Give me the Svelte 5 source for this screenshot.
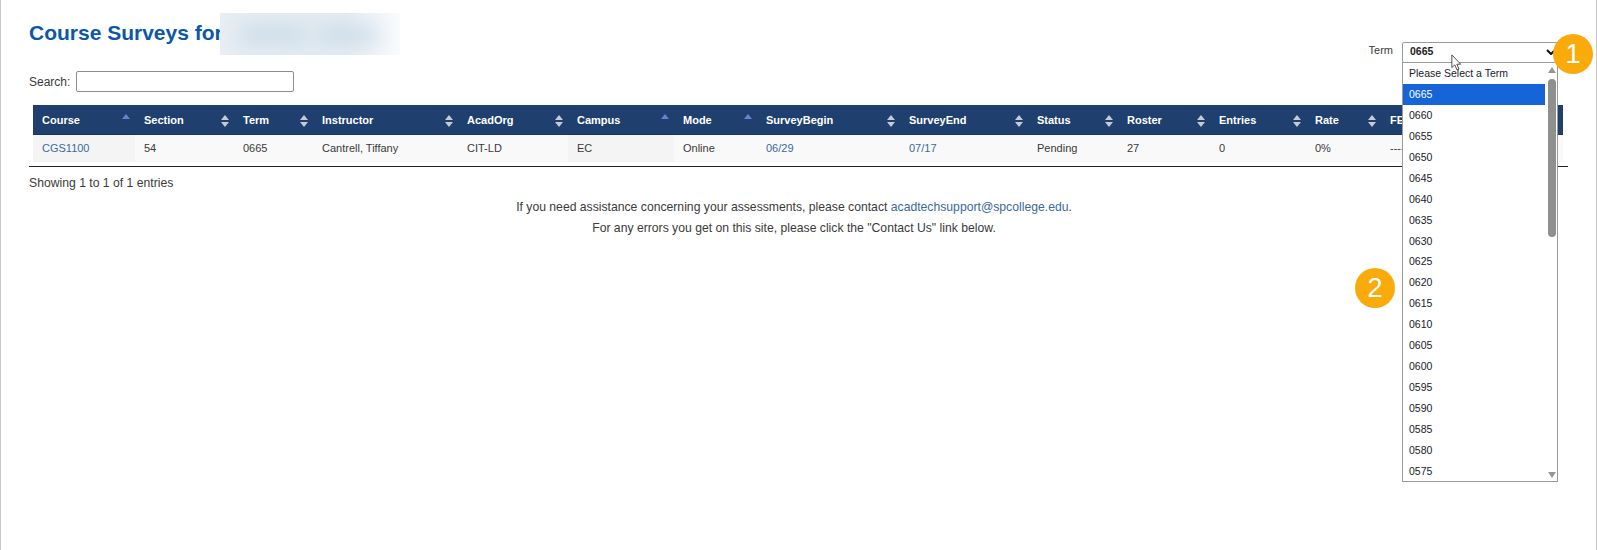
<script lang="ts">
  const columns = [
    { name: "Course", width: 102, sort: "up" },
    { name: "Section", width: 99, sort: "both" },
    { name: "Term", width: 79, sort: "both" },
    { name: "Instructor", width: 145, sort: "both" },
    { name: "AcadOrg", width: 110, sort: "both" },
    { name: "Campus", width: 106, sort: "up" },
    { name: "Mode", width: 83, sort: "up" },
    { name: "SurveyBegin", width: 143, sort: "both" },
    { name: "SurveyEnd", width: 128, sort: "both" },
    { name: "Status", width: 90, sort: "both" },
    { name: "Roster", width: 92, sort: "both" },
    { name: "Entries", width: 96, sort: "both" },
    { name: "Rate", width: 75, sort: "both" },
    { name: "FE", width: 182, sort: "both" },
  ];

  const row = [
    { text: "CGS1100", link: true },
    { text: "54" },
    { text: "0665" },
    { text: "Cantrell, Tiffany" },
    { text: "CIT-LD" },
    { text: "EC" },
    { text: "Online" },
    { text: "06/29", link: true },
    { text: "07/17", link: true },
    { text: "Pending" },
    { text: "27" },
    { text: "0" },
    { text: "0%" },
    { text: "----" },
  ];

  const terms: string[] = [];
  for (let t = 665; t >= 575; t -= 5) terms.push("0" + t);
</script>

<div class="page">
  <div class="top">
    <div>
      <h1>Course Surveys for<span class="smudge"><i></i><i></i></span></h1>
      <label class="search">Search: <input type="text" /></label>
    </div>
    <div class="term">
      <span>Term</span>
      <div class="select">
        0665
        <svg class="chevron" width="10" height="6" viewBox="0 0 10 6"><path d="M1 1l4 4 4-4" fill="none" stroke="#111" stroke-width="2" /></svg>
        <div class="list">
          <div class="opts">
            <div class="opt">Please Select a Term</div>
            {#each terms as t, i}
              <div class="opt" class:sel={i === 0}>{t}</div>
            {/each}
          </div>
          <div class="scroll">
            <b class="up"></b>
            <b class="thumb"></b>
            <b class="down"></b>
          </div>
        </div>
      </div>
    </div>
  </div>

  <table>
    <colgroup>
      {#each columns as c}<col style="width: {c.width}px" />{/each}
    </colgroup>
    <thead>
      <tr>
        {#each columns as c}
          <th>
            {c.name}
            <span class="sort" class:asc={c.sort === "up"}>
              <b class="a"></b>
              {#if c.sort === "both"}<b class="d"></b>{/if}
            </span>
          </th>
        {/each}
      </tr>
    </thead>
    <tbody>
      <tr>
        {#each row as cell, i}
          <td class:shade={i === 0 || i === 5}>
            {#if cell.link}<a href="#top">{cell.text}</a>{:else}{cell.text}{/if}
          </td>
        {/each}
      </tr>
    </tbody>
  </table>
  <div class="rule"></div>
  <p class="info">Showing 1 to 1 of 1 entries</p>
  <p class="note">If you need assistance concerning your assessments, please contact <a href="#top">acadtechsupport@spcollege.edu</a>.</p>
  <p class="note second">For any errors you get on this site, please click the "Contact Us" link below.</p>

  <div class="badge one">1</div>
  <div class="badge two">2</div>
  <svg class="cursor" width="11" height="17" viewBox="0 0 13 20"><path d="M1 1v15l3.5-3.2 2.6 6 2.4-1-2.6-5.8h4.6z" fill="#fff" stroke="#444" stroke-width="1.1" /></svg>
</div>

<style>
  :global(body) {
    margin: 0;
    background: #fff;
  }
  .page {
    position: relative;
    box-sizing: border-box;
    width: 1597px;
    height: 550px;
    overflow: hidden;
    padding: 0 27px 0 28px;
    border-left: 1px solid #c8c8c8;
    border-right: 1px solid #c8c8c8;
    font-family: "Liberation Sans", Arial, sans-serif;
    font-size: 12.2px;
    color: #3a3a3a;
  }
  .top {
    display: flex;
    justify-content: space-between;
    height: 105px;
  }
  h1 {
    position: relative;
    height: 42px;
    margin: 12px 0 17px;
    font-size: 21px;
    line-height: 42px;
    color: #0b58a8;
  }
  .smudge {
    position: absolute;
    top: 1px;
    left: 191px;
    width: 180px;
    height: 42px;
    overflow: hidden;
    background: linear-gradient(90deg, #e8eef4, #e4ecf2 25%, #e5ecf2 70%, #fafbfd 100%);
  }
  .smudge i {
    position: absolute;
    top: 14px;
    height: 16px;
    border-radius: 8px;
    background: #c8dae8;
    filter: blur(10px);
  }
  .smudge i:first-child {
    left: 18px;
    width: 70px;
  }
  .smudge i:last-child {
    left: 96px;
    width: 62px;
  }
  .search {
    display: flex;
    align-items: center;
    gap: 6px;
    height: 21px;
    font-size: 12px;
  }
  .search input {
    box-sizing: border-box;
    width: 218px;
    height: 21px;
    margin: 0;
    border: 1px solid #8d8d8d;
    border-radius: 2px;
    background: #fff;
  }
  .term {
    display: flex;
    align-items: flex-start;
    gap: 9px;
    margin: 42px 11px 0 0;
    font-size: 11px;
  }
  .term > span {
    line-height: 16px;
  }
  .select {
    position: relative;
    box-sizing: border-box;
    width: 156px;
    height: 21px;
    padding-left: 7px;
    border: 1px solid #9a9a9a;
    border-radius: 2px;
    background: #fff;
    font-size: 10.5px;
    font-weight: 700;
    line-height: 17px;
    color: #222;
  }
  .chevron {
    position: absolute;
    top: 6px;
    right: 1px;
  }
  .list {
    position: absolute;
    z-index: 2;
    top: 19px;
    left: -1px;
    box-sizing: border-box;
    display: flex;
    width: 156px;
    height: 420px;
    overflow: hidden;
    border: 1px solid #9a9a9a;
    background: #fff;
    font-weight: 400;
    line-height: normal;
  }
  .opts {
    width: 142px;
  }
  .opt {
    height: 20.94px;
    padding-left: 6px;
    line-height: 20.94px;
    color: #1a1a2a;
  }
  .sel {
    background: #1565d8;
    color: #fff;
  }
  .scroll {
    position: relative;
    flex: 1;
  }
  .scroll b {
    position: absolute;
    display: block;
  }
  .up,
  .down {
    left: 2.5px;
    width: 0;
    height: 0;
    border-left: 4.5px solid transparent;
    border-right: 4.5px solid transparent;
  }
  .up {
    top: 4px;
    border-bottom: 6px solid #969696;
  }
  .down {
    bottom: 3px;
    border-top: 6px solid #969696;
  }
  .thumb {
    top: 16px;
    left: 3px;
    width: 8px;
    height: 158px;
    border-radius: 4px;
    background: #8f8f8f;
  }
  table {
    width: 1530px;
    margin-left: 4px;
    table-layout: fixed;
    border-collapse: collapse;
  }
  th {
    position: relative;
    height: 29px;
    padding: 0 9px;
    background: #1f3f6e;
    color: #fff;
    font-size: 11px;
    text-align: left;
    border-bottom: 1px solid #1a365f;
  }
  td {
    height: 25px;
    padding: 0 9px 2px;
    background: #f9f9f9;
    color: #3a3a3a;
    font-size: 11px;
  }
  td.shade {
    background: #f4f4f4;
  }
  a {
    color: #3a6a9e;
    text-decoration: none;
  }
  .sort {
    position: absolute;
    top: 10px;
    right: 5px;
    width: 8px;
    height: 12px;
  }
  .sort b {
    position: absolute;
    left: 0;
    width: 0;
    height: 0;
    border-left: 4px solid transparent;
    border-right: 4px solid transparent;
  }
  .sort .a {
    top: 0;
    border-bottom: 5px solid #c6ccd6;
  }
  .sort .d {
    bottom: 0;
    border-top: 5px solid #c6ccd6;
  }
  .sort.asc .a {
    top: -1px;
    border-bottom-color: #6f7fd0;
  }
  .rule {
    width: 1539px;
    margin-top: 4px;
    border-top: 1px solid #222;
  }
  p {
    margin: 0;
  }
  .info {
    margin-top: 9px;
    line-height: 14px;
  }
  .note {
    margin-top: 10px;
    padding-right: 10px;
    line-height: 14px;
    text-align: center;
  }
  .second {
    margin-top: 7px;
  }
  .badge {
    position: absolute;
    z-index: 3;
    display: flex;
    align-items: center;
    justify-content: center;
    width: 40px;
    height: 40px;
    border-radius: 50%;
    background: #f9ab0b;
    color: #fff;
    font-size: 27px;
  }
  .one {
    left: 1552px;
    top: 34px;
  }
  .two {
    left: 1354px;
    top: 268px;
  }
  .cursor {
    position: absolute;
    z-index: 4;
    left: 1450px;
    top: 54px;
  }
</style>
